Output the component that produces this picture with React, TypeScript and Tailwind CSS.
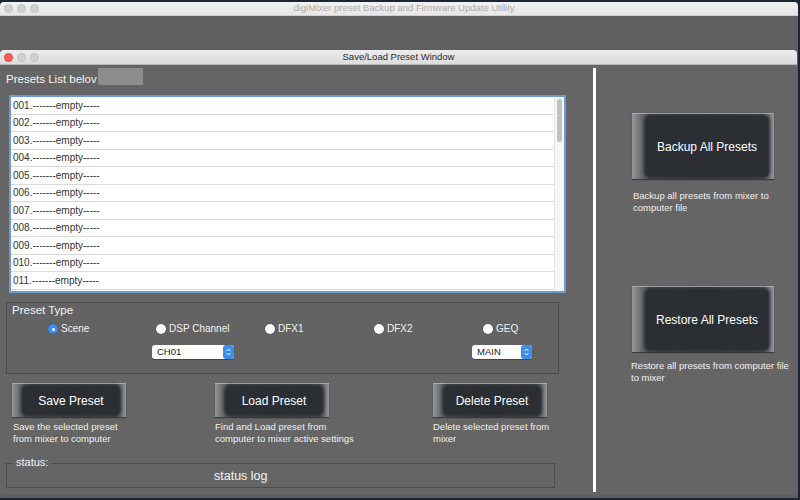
import React from "react";

const font = { fontFamily: '"Liberation Sans", "Helvetica Neue", Arial, sans-serif' };

function Lights({ red }: { red?: boolean }) {
  return (
    <div className="flex items-center gap-[4px] pl-[4px]">
      <div className={`w-[9px] h-[9px] rounded-full ${red ? "bg-[#fc5f57] border border-[#e0443e]" : "bg-[#d0d0d0] border border-[#c2c2c2]"}`} />
      <div className="w-[9px] h-[9px] rounded-full bg-[#d0d0d0] border border-[#c2c2c2]" />
      <div className="w-[9px] h-[9px] rounded-full bg-[#d0d0d0] border border-[#c2c2c2]" />
    </div>
  );
}

function BevelButton({ label, w, h, pad }: { label: string; w: string; h: string; pad: string }) {
  return (
    <div
      className={`${w} ${h} flex ${pad} pt-[3px] pb-[3px] border-t border-[#a9acaf] bg-[linear-gradient(to_right,#95989b_0%,#6a6e72_6%,#484c51_12%,#3c4045_50%,#484c51_92%,#6a6e72_96%,#95989b_100%)] shadow-[0_1px_1px_rgba(0,0,0,0.4)]`}
    >
      <div className="flex-1 flex items-center justify-center rounded-[4px] bg-[#2b2f34] shadow-[0_0_3px_2px_#2b2f34] text-white text-[12px]">
        {label}
      </div>
    </div>
  );
}

function Radio({ label, checked }: { label: string; checked?: boolean }) {
  return (
    <div className="flex items-center gap-[3px] text-[10px] leading-[12px] text-[#f2f2f2]">
      {checked ? (
        <div className="w-[10px] h-[10px] rounded-full bg-[#3a8ef2] flex items-center justify-center shadow-[0_0_1px_rgba(0,0,0,0.5)]">
          <div className="w-[3px] h-[3px] rounded-full bg-white" />
        </div>
      ) : (
        <div className="w-[10px] h-[10px] rounded-full bg-white shadow-[0_0_1px_rgba(0,0,0,0.6)]" />
      )}
      <span>{label}</span>
    </div>
  );
}

function Select({ value, w }: { value: string; w: string }) {
  return (
    <div className={`${w} h-[14px] flex rounded-[3px] bg-white shadow-[0_1px_1px_rgba(0,0,0,0.35)] overflow-hidden`}>
      <div className="flex-1 pl-[5px] text-[9.5px] leading-[14px] text-[#222]">{value}</div>
      <div className="w-[11px] h-full bg-[#3b8ef0] rounded-[3px] flex items-center justify-center">
        <svg width="7" height="10" viewBox="0 0 7 10">
          <path d="M1.5 4 L3.5 2 L5.5 4" stroke="white" strokeWidth="1" fill="none" />
          <path d="M1.5 6 L3.5 8 L5.5 6" stroke="white" strokeWidth="1" fill="none" />
        </svg>
      </div>
    </div>
  );
}

export default function App() {
  const rows = Array.from({ length: 11 }, (_, i) => String(i + 1).padStart(3, "0"));
  return (
    <div className="w-[800px] h-[500px] relative overflow-hidden bg-[#1b2535]" style={font}>
      {/* Back window */}
      <div className="absolute left-0 top-[2px] w-[798px] h-[496px] bg-[#5f5f5f] rounded-t-[4px] overflow-hidden">
        <div className="h-[14px] relative flex items-center bg-[linear-gradient(#f1f1f1,#e6e6e6)] border-b border-[#cfcfcf]">
          <Lights />
          <div className="absolute inset-0 flex items-center justify-center pl-[10px] text-[9.5px] text-[#ababab]">
            digiMixer preset Backup and Firmware Update Utility
          </div>
        </div>
      </div>

      {/* Front window */}
      <div className="absolute left-0 top-[50px] w-[797px] h-[445px] bg-[#656565] rounded-[4px] overflow-hidden flex flex-col">
        <div className="h-[15px] shrink-0 relative flex items-center bg-[linear-gradient(#ececec,#dcdcdc)] border-b border-[#b8b8b8]">
          <Lights red />
          <div className="absolute inset-0 flex items-center justify-center text-[9.5px] text-[#2a2a2a]">
            Save/Load Preset Window
          </div>
        </div>

        <div className="flex flex-1">
          {/* Left column */}
          <div className="w-[593px] flex flex-col">
            <div className="mt-[3px] h-[17px] flex items-center">
              <div className="pl-[6px] w-[98px] text-[11.5px] text-[#f4f4f4] mt-[6px]">Presets List belov</div>
              <div className="w-[45px] h-[17px] bg-[#8c8c8c]" />
            </div>

            <div className="mt-[10px] ml-[9px] w-[557px] h-[198px] border-2 border-[#6e9ad4] bg-white flex overflow-hidden">
              <div className="flex-1 flex flex-col">
                {rows.map((n) => (
                  <div key={n} className="h-[17.5px] shrink-0 border-b border-[#dadada] pl-[2px] flex items-center text-[10px] text-[#333]">
                    {n}.-------empty-----
                  </div>
                ))}
              </div>
              <div className="w-[10px] bg-[#f6f6f6] border-l border-[#e6e6e6] flex justify-center pt-[2px]">
                <div className="w-[5px] h-[43px] rounded-full bg-[#c1c1c1]" />
              </div>
            </div>

            <div className="mt-[9px] ml-[6px] w-[553px] h-[72px] border border-[#4c4c4c] bg-[#636363] flex flex-col">
              <div className="pl-[5px] h-[14px] text-[11.5px] leading-[14px] text-[#f2f2f2]">Preset Type</div>
              <div className="mt-[6px] h-[12px] flex items-center">
                <div className="w-[149px] pl-[41px]"><Radio label="Scene" checked /></div>
                <div className="w-[109px]"><Radio label="DSP Channel" /></div>
                <div className="w-[109px]"><Radio label="DFX1" /></div>
                <div className="w-[109px]"><Radio label="DFX2" /></div>
                <div className="w-[60px]"><Radio label="GEQ" /></div>
              </div>
              <div className="mt-[10px] flex">
                <div className="ml-[145px]"><Select value="CH01" w="w-[82px]" /></div>
                <div className="ml-[238px]"><Select value="MAIN" w="w-[60px]" /></div>
              </div>
            </div>

            <div className="mt-[9px] flex">
              <div className="ml-[12px] w-[203px] flex flex-col">
                <BevelButton label="Save Preset" w="w-[114px]" h="h-[34px]" pad="pl-[11px] pr-[7px]" />
                <div className="mt-[4px] ml-[1px] text-[9.5px] leading-[11.5px] text-[#f0f0f0]">
                  Save the selected preset<br />from mixer to computer
                </div>
              </div>
              <div className="w-[218px] flex flex-col">
                <BevelButton label="Load Preset" w="w-[114px]" h="h-[34px]" pad="pl-[11px] pr-[7px]" />
                <div className="mt-[4px] text-[9.5px] leading-[11.5px] text-[#f0f0f0]">
                  Find and Load preset from<br />computer to mixer active settings
                </div>
              </div>
              <div className="flex flex-col">
                <BevelButton label="Delete Preset" w="w-[114px]" h="h-[34px]" pad="pl-[11px] pr-[7px]" />
                <div className="mt-[4px] text-[9.5px] leading-[11.5px] text-[#f0f0f0]">
                  Delete selected preset from<br />mixer
                </div>
              </div>
            </div>

            <div className="mt-[19px] ml-[6px] w-[549px] h-[25px] border border-[#4c4c4c] relative flex items-center">
              <div className="absolute left-[6px] top-[-9px] px-[3px] bg-[#656565] text-[11px] leading-[14px] text-[#f2f2f2]">status:</div>
              <div className="pl-[207px] pt-[1px] text-[12.5px] text-[#f4f4f4]">status log</div>
            </div>
          </div>

          {/* Separator */}
          <div className="w-[3px] mt-[3px] mb-[3px] bg-white" />

          {/* Right column */}
          <div className="flex-1 flex flex-col pl-[36px]">
            <div className="mt-[48px]">
              <BevelButton label="Backup All Presets" w="w-[142px]" h="h-[66px]" pad="pl-[14px] pr-[6px]" />
            </div>
            <div className="mt-[11px] ml-[1px] text-[9.5px] leading-[12px] text-[#f0f0f0]">
              Backup all presets from mixer to<br />computer file
            </div>
            <div className="mt-[72px]">
              <BevelButton label="Restore All Presets" w="w-[142px]" h="h-[66px]" pad="pl-[14px] pr-[6px]" />
            </div>
            <div className="mt-[8px] ml-[-1px] text-[9.5px] leading-[12px] text-[#f0f0f0]">
              Restore all presets from computer file<br />to mixer
            </div>
          </div>
        </div>
      </div>
    </div>
  );
}
